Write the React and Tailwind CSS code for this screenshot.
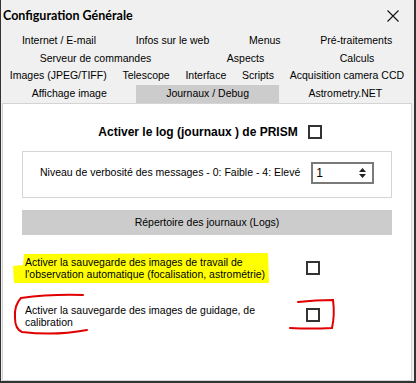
import React from 'react';

const tabRows = [
  { h: 'h-[18px]', tabs: ['Internet / E-mail', 'Infos sur le web', 'Menus', 'Pré-traitements'] },
  { h: 'h-[17px]', tabs: ['Serveur de commandes', 'Aspects', 'Calculs'] },
  { h: 'h-[18px]', tabs: ['Images (JPEG/TIFF)', 'Telescope', 'Interface', 'Scripts', 'Acquisition camera CCD'] },
  { h: 'h-[18px]', tabs: ['Affichage image', 'Journaux / Debug', 'Astrometry.NET'] },
];

function CheckBox() {
  return <div className="w-[14px] h-[14px] border-2 border-[#333333] bg-white shrink-0" />;
}

export default function App() {
  return (
    <div
      className="relative w-[416px] h-[383px] bg-[#f0f0f0] pl-[2px] pr-[4px] pb-[2px] flex flex-col text-black shadow-[inset_1px_0_0_#333333,inset_-2px_-2px_0_#333333]"
      style={{ fontFamily: '"Liberation Sans", Arial, sans-serif' }}
    >
      {/* yellow highlight (annotation) */}
      <svg className="absolute left-0 top-0 pointer-events-none" width="416" height="383">
        <path d="M24,254 L268,253 L269,283 L14,283 L13,266 L23,265 Z" fill="#ffff00" />
      </svg>

      {/* title bar */}
      <div className="h-[32px] flex items-center justify-between pl-[1px] pr-[13px] shrink-0">
        <span className="text-[12.5px] font-bold" style={{ fontFamily: 'Lato, sans-serif' }}>
          Configuration Générale
        </span>
        <svg width="12" height="12" viewBox="0 0 12 12">
          <path d="M0.5,0.5 L11.5,11.5 M11.5,0.5 L0.5,11.5" stroke="#111" strokeWidth="1.1" />
        </svg>
      </div>

      {/* tabs */}
      <div className="flex flex-col text-[10.5px] shrink-0">
        {tabRows.map((row, i) => (
          <div key={i} className={`flex ${row.h}`}>
            {row.tabs.map((t) => (
              <div
                key={t}
                className={`flex-auto text-center whitespace-nowrap flex items-center justify-center ${
                  t === 'Journaux / Debug' ? 'bg-[#cccccc]' : ''
                }`}
              >
                {t}
              </div>
            ))}
          </div>
        ))}
      </div>

      {/* panel */}
      <div className="flex-1 bg-white border border-[#d4d4d4] px-[19px] text-[10.5px]">
        <div className="mt-[18px] h-[20px] flex items-center justify-center gap-[10px] pl-[6px]">
          <span className="text-[12px] font-bold">Activer le log (journaux ) de PRISM</span>
          <CheckBox />
        </div>

        <div className="mt-[9px] h-[47px] border border-[#d5d5d5] flex items-center pl-[17px] pb-[4px]">
          <span>Niveau de verbosité des messages - 0: Faible - 4: Elevé</span>
          <div className="ml-[11px] w-[63px] h-[22px] border-2 border-[#7a7a7a] bg-white flex items-center justify-between pl-[3px] pr-[6px]">
            <span className="text-[12px]">1</span>
            <svg width="7" height="12" viewBox="0 0 7 12">
              <path d="M3.5,1 L7,5 L0,5 Z M0,7 L7,7 L3.5,11 Z" fill="#222" />
            </svg>
          </div>
        </div>

        <div className="mt-[12px] h-[25px] bg-[#cccccc] flex items-center justify-center">
          Répertoire des journaux (Logs)
        </div>

        <div className="relative mt-[20px] flex items-center pl-[3px]">
          <div className="w-[262px] leading-[12px] pt-[1px]">
            Activer la sauvegarde des images de travail de l'observation automatique (focalisation, astrométrie)
          </div>
          <div className="ml-[19px]">
            <CheckBox />
          </div>
        </div>

        <div className="relative mt-[22px] flex items-center pl-[3px]">
          <div className="w-[262px] leading-[12px] pt-[2px]">
            Activer la sauvegarde des images de guidage, de calibration
          </div>
          <div className="ml-[19px]">
            <CheckBox />
          </div>
        </div>
      </div>

      {/* red marks (annotation) */}
      <svg className="absolute left-0 top-0 pointer-events-none" width="416" height="383">
        <g fill="none" stroke="#e00000" strokeWidth="2" strokeLinecap="round">
          <path d="M83,295 Q50,294 21,298 Q14,305 15,318 Q15,329 22,332 Q55,336 87,330" />
          <path d="M298,302 Q316,300 333,300 Q335,315 332,328 Q310,329 290,328" />
        </g>
      </svg>
    </div>
  );
}
